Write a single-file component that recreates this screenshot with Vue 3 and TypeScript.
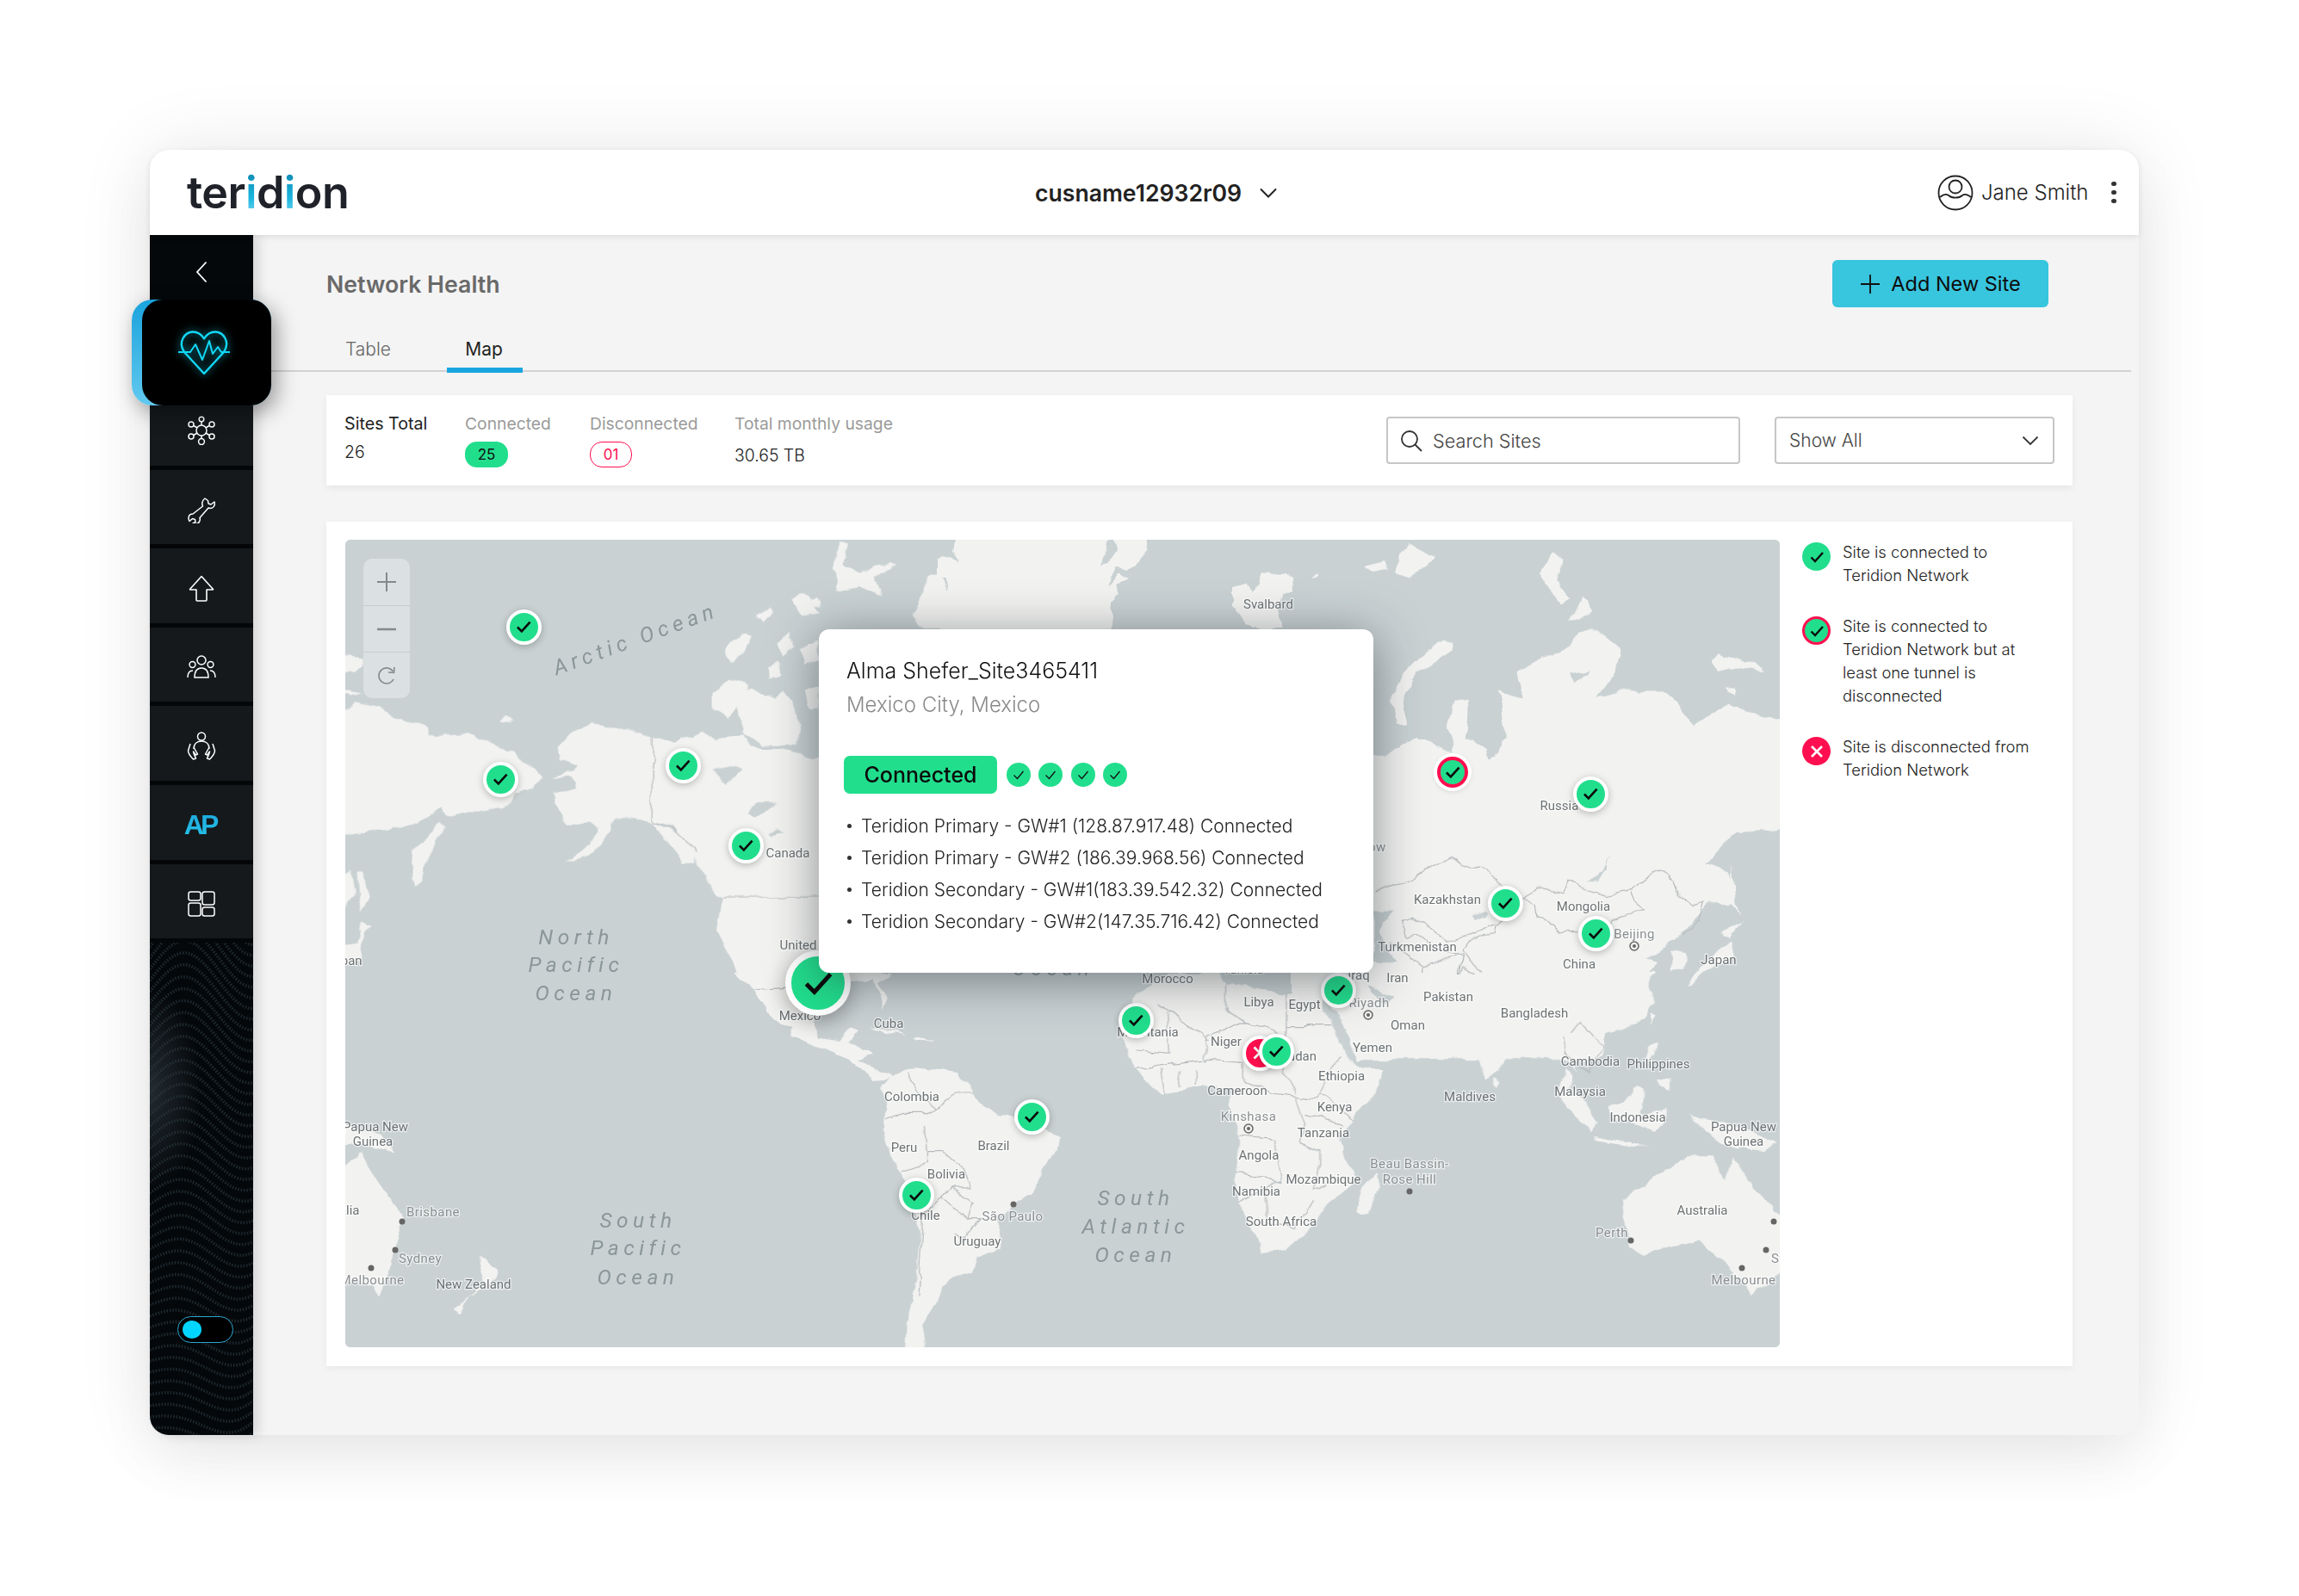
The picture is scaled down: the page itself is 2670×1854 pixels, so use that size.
<script setup lang="ts">
interface Pin { x: number; y: number; kind?: string }

// map area starts at 401,627 on the page, pins are given in page coordinates
const pins: Pin[] = [
  { x: 608, y: 728 }, { x: 581, y: 905 }, { x: 793, y: 889 }, { x: 866, y: 982 },
  { x: 1687, y: 897, kind: 'warn' }, { x: 1847, y: 922 }, { x: 1748, y: 1049 }, { x: 1853, y: 1084 },
  { x: 1554, y: 1150 }, { x: 1319, y: 1185 }, { x: 1463, y: 1223, kind: 'down' }, { x: 1482, y: 1221 },
  { x: 1198, y: 1297 }, { x: 1064, y: 1388 }, { x: 950, y: 1142, kind: 'big' }
]

const labels: [string, number, number][] = [
  ['Canada', 915, 991], ['United', 927, 1098], ['Mexico', 929, 1180], ['Cuba', 1032, 1189],
  ['Japan', 400, 1116], ['Papua New', 436, 1309], ['Guinea', 433, 1326], ['Australia', 388, 1406],
  ['New Zealand', 550, 1492], ['Colombia', 1059, 1274], ['Peru', 1050, 1333], ['Brazil', 1154, 1331],
  ['Bolivia', 1099, 1364], ['Chile', 1075, 1412], ['Uruguay', 1135, 1442], ['Morocco', 1356, 1137],
  ['Tunisia', 1444, 1126], ['Libya', 1462, 1164], ['Egypt', 1515, 1167], ['Iraq', 1578, 1133], ['Iran', 1623, 1136],
  ['Pakistan', 1682, 1158], ['Oman', 1635, 1191], ['Yemen', 1594, 1217], ['Bangladesh', 1782, 1177],
  ['Turkmenistan', 1646, 1100], ['Kazakhstan', 1681, 1045], ['Mongolia', 1839, 1053], ['China', 1834, 1120],
  ['Japan', 1996, 1115], ['Russia', 1811, 936], ['Svalbard', 1473, 702], ['Mauritania', 1333, 1199],
  ['Niger', 1424, 1210], ['Sudan', 1508, 1227], ['Ethiopia', 1558, 1250], ['Cameroon', 1437, 1267],
  ['Kenya', 1550, 1286], ['Tanzania', 1537, 1316], ['Angola', 1462, 1342], ['Mozambique', 1537, 1370],
  ['Namibia', 1459, 1384], ['South Africa', 1488, 1419], ['Maldives', 1707, 1274], ['Cambodia', 1847, 1233],
  ['Philippines', 1926, 1236], ['Malaysia', 1835, 1268], ['Indonesia', 1902, 1298], ['Papua New', 2025, 1309],
  ['Guinea', 2025, 1326], ['Australia', 1977, 1406]
]

const cities: [string, number, number][] = [
  ['Brisbane', 503, 1408], ['Sydney', 488, 1462], ['Melbourne', 432, 1487], ['São Paulo', 1176, 1413],
  ['Riyadh', 1590, 1165], ['Beijing', 1898, 1085], ['Moscow', 1580, 984], ['Kinshasa', 1450, 1297],
  ['Beau Bassin-', 1637, 1352], ['Rose Hill', 1637, 1370], ['Perth', 1872, 1432], ['Melbourne', 2025, 1487],
  ['Sydney', 2082, 1462], ['Brisbane', 2100, 1408]
]

const dots: [number, number][] = [
  [467, 1419], [459, 1452], [431, 1473], [1177, 1399], [1637, 1384], [1894, 1441],
  [2023, 1473], [2060, 1419], [2051, 1452]
]
const capitals: [number, number][] = [[1589, 1179], [1898, 1099], [1450, 1311]]

const oceans: [string, number, number][] = [
  ['North', 669, 1088], ['Pacific', 669, 1120], ['Ocean', 669, 1153],
  ['South', 741, 1417], ['Pacific', 741, 1449], ['Ocean', 741, 1483],
  ['South', 1319, 1391], ['Atlantic', 1319, 1424], ['Ocean', 1319, 1457],
  ['Ocean', 1223, 1124]
]

const tunnels = [
  'Teridion Primary - GW#1 (128.87.917.48) Connected',
  'Teridion Primary - GW#2 (186.39.968.56) Connected',
  'Teridion Secondary - GW#1(183.39.542.32) Connected',
  'Teridion Secondary - GW#2(147.35.716.42) Connected'
]

// wavy lines for the dark lower part of the sidebar
const waves: string[] = []
for (let i = -8; i < 44; i++) {
  let d = ''
  for (let x = 0; x <= 120; x += 6) {
    const y = 20 + i * 13 - 34 * Math.cos(((x - 40) / 120) * Math.PI * 1.5) + 0.9 * i * Math.sin(x / 30)
    d += (x === 0 ? 'M' : 'L') + x + ' ' + y.toFixed(1) + ' '
  }
  waves.push(d)
}
</script>

<template>
  <div class="page">
    <div class="card">
      <header class="topbar">
        <div class="logo">ter<span class="logo-i">i</span>d<span class="logo-i">i</span>on</div>
        <div class="tenant">
          <span>cusname12932r09</span>
          <svg width="22" height="12" viewBox="0 0 22 12"><path d="M2 1.5l9 9 9-9" fill="none" stroke="#222" stroke-width="2" /></svg>
        </div>
        <div class="user">
          <svg width="42" height="42" viewBox="0 0 42 42" fill="none" stroke="#222" stroke-width="1.8">
            <circle cx="21" cy="21" r="19.5" />
            <circle cx="21" cy="14" r="7.5" />
            <path d="M3 26c5-4 8-3.5 10-2 4 3.500 12 3.500 16 0 2-1.500 5-2 10 2" />
          </svg>
          <span class="user-name">Jane Smith</span>
          <span class="dots"><i></i><i></i><i></i></span>
        </div>
      </header>

      <div class="body">
        <aside class="sidebar">
          <svg class="sidebar-waves" viewBox="0 0 120 574" preserveAspectRatio="none">
            <path v-for="(d, i) in waves" :key="i" :d="d" fill="none" stroke="#2e3d44" stroke-width="3.5" stroke-dasharray="1.6 1.8" opacity=".6" />
          </svg>
          <div class="back">
            <svg width="14" height="26" viewBox="0 0 14 26"><path d="M12.5 1.5L2 13l10.5 11.5" fill="none" stroke="#fff" stroke-width="1.8" /></svg>
          </div>
          <div class="active">
            <div class="active-inner">
              <svg class="heart" width="60" height="52" viewBox="0 0 60 52" fill="none" stroke="#12d8f6" stroke-width="2.4" stroke-linejoin="round">
                <path d="M30 50L7 25C-1 13 8 1.5 17 1.5c6 0 10 3 13 8 3-5 7-8 13-8 9 0 18 11.5 10 23.500z" />
                <path d="M0 25h14l6-9 8 18 8-22 4 15 6-8 4 6h10" stroke-width="2" />
              </svg>
            </div>
          </div>
          <div class="item">
            <svg width="34" height="34" viewBox="0 0 34 34" fill="none" stroke="#fff" stroke-width="1.5">
              <circle cx="17" cy="17" r="6" />
              <circle cx="17" cy="4" r="2.8" /><circle cx="17" cy="30" r="3.4" />
              <circle cx="5" cy="10" r="3" /><circle cx="29" cy="10" r="3" />
              <circle cx="5" cy="24" r="3" /><circle cx="29" cy="24" r="3" />
              <path d="M17 7v4M17 23v3.5M8 11.5l4 2.500M26 11.5l-4 2.500M8 22.5l4-2.500M26 22.5l-4-2.500" />
            </svg>
          </div>
          <div class="item">
            <svg width="32" height="32" viewBox="0 0 32 32" fill="none" stroke="#fff" stroke-width="1.5" stroke-linejoin="round">
              <path d="M20 3c-3 2-4 6-2.500 9L6 21c-3 0-5 2-5 5 0 1.500.5 2.500 1 3.500l3.500-3 3 1 .5 3-3 1.500c3 1 6 .5 7.500-2 1-1.500 1-3 .5-4.500L24 14c3 1 6 0 7-3 .5-1.500.5-3 0-4l-4 3-3-1-.5-3.500z" />
            </svg>
          </div>
          <div class="item">
            <svg width="30" height="31" viewBox="0 0 30 31" fill="none" stroke="#fff" stroke-width="1.6" stroke-linejoin="round">
              <path d="M15 1.5L28.5 16.5a.5.5 0 0 1-.5.5H21v12a1 1 0 0 1-1 1H10a1 1 0 0 1-1-1V17H2a.5.5 0 0 1-.5-.5z" />
            </svg>
          </div>
          <div class="item">
            <svg width="34" height="28" viewBox="0 0 34 28" fill="none" stroke="#fff" stroke-width="1.5">
              <circle cx="17" cy="6" r="5" /><circle cx="6.5" cy="11" r="3.4" /><circle cx="27.5" cy="11" r="3.4" />
              <path d="M9 26c0-7 3-11 8-11s8 4 8 11zM1 26c0-5 2-8 6-8M33 26c0-5-2-8-6-8" />
            </svg>
          </div>
          <div class="item">
            <svg width="34" height="34" viewBox="0 0 34 34" fill="none" stroke="#fff" stroke-width="1.5" stroke-linejoin="round">
              <circle cx="17" cy="5.5" r="4.5" />
              <path d="M8 20c0-6 4-9 9-9s9 3 9 9" />
              <path d="M4 14L1.500 22c0 4 3 7 6 10l3-1c-1-3-3-5-3-8l3 4 2-1-4-7M30 14l2.500 8c0 4-3 7-6 10l-3-1c1-3 3-5 3-8l-3 4-2-1 4-7" />
            </svg>
          </div>
          <div class="item">
            <span class="ap">AP</span>
          </div>
          <div class="item">
            <svg width="32" height="30" viewBox="0 0 32 30" fill="none" stroke="#fff" stroke-width="1.5">
              <rect x="1" y="1" width="14" height="10" rx="2.5" /><rect x="1" y="14" width="14" height="15" rx="2.5" />
              <rect x="17" y="1" width="14" height="15" rx="2.5" /><rect x="17" y="19" width="14" height="10" rx="2.5" />
            </svg>
          </div>
          <div class="toggle"><span></span></div>
        </aside>

        <main class="main">
          <div class="title-row">
            <h1>Network Health</h1>
            <button class="add-btn">
              <svg width="24" height="24" viewBox="0 0 24 24"><path d="M12 1v22M1 12h22" stroke="#111" stroke-width="1.8" /></svg>
              Add New Site
            </button>
          </div>

          <div class="tabs">
            <span class="tab">Table</span>
            <span class="tab tab-on">Map</span>
          </div>

          <section class="summary">
            <div class="stat stat-total">
              <b>Sites Total</b>
              <span>26</span>
            </div>
            <div class="stat stat-conn">
              <em>Connected</em>
              <span class="badge badge-green">25</span>
            </div>
            <div class="stat stat-disc">
              <em>Disconnected</em>
              <span class="badge badge-red">01</span>
            </div>
            <div class="stat">
              <em>Total monthly usage</em>
              <span class="usage">30.65 TB</span>
            </div>
            <div class="search">
              <svg width="28" height="28" viewBox="0 0 28 28" fill="none" stroke="#333" stroke-width="1.8"><circle cx="12" cy="12" r="9" /><path d="M18.5 18.5l7.5 7.500" /></svg>
              <span>Search Sites</span>
            </div>
            <div class="select">
              <span>Show All</span>
              <svg width="20" height="12" viewBox="0 0 20 12"><path d="M1.5 1.5L10 10l8.500-8.500" fill="none" stroke="#333" stroke-width="1.8" /></svg>
            </div>
          </section>

          <section class="map-panel">
            <div class="map">
              <svg class="map-svg" viewBox="401 627 1666 938" width="1666" height="938">
                <defs>
                  <filter id="rough" x="-3%" y="-3%" width="106%" height="106%">
                    <feTurbulence type="fractalNoise" baseFrequency=".04" numOctaves="3" seed="7" />
                    <feDisplacementMap in="SourceGraphic" scale="11" xChannelSelector="R" yChannelSelector="G" />
                  </filter>
                </defs>
                <rect x="401" y="627" width="1666" height="938" fill="#c9d1d3" />

                <g filter="url(#rough)">
                  <!-- greenland and svalbard -->
                  <g fill="#f2f2f0">
                    <path d="M1090 600H1330L1332 640 1320 655 1300 665 1310 672 1295 680 1300 690 1290 700 1292 715 1290 735H1090Z" />
                    <path d="M1432 682L1448 678 1456 690 1465 665 1480 668 1502 670 1503 685 1490 690 1485 710 1490 725 1490 731 1470 731 1445 725 1432 705Z" />
                    <path d="M1523 670L1530 665 1530 670 1523 672Z" />
                  </g>
                  <g fill="#c9d1d3">
                    <path d="M1085 600L1112 600 1105 640 1112 650 1095 645 1085 655Z" />
                    <path d="M1085 672L1100 672 1098 685 1085 695Z" />
                    <path d="M1290 610L1296 640 1285 655 1278 657 1284 640Z" />
                    <path d="M1295 658L1310 660 1296 668 1290 682 1288 672Z" />
                  </g>

                  <!-- north west part -->
                  <g transform="translate(400 620) scale(.4464 .3827)">
                    <g fill="#f2f2f0">
                      <path d="M-30 360L20 368 45 372 48 400 30 420 -30 420Z" />
                      <path d="M-30 470L30 480 50 485 20 492 -30 482Z" />
                      <path d="M-30 555L30 510 90 525 120 548 180 572 215 590 220 612 290 608 325 605 345 612 400 645 440 660 468 700 515 730 490 775 440 790 410 825 345 840 270 860 255 825 225 855 175 882 100 900 30 905 -30 925Z" />
                      <path d="M180 960L250 880 262 890 240 930 215 1000 185 1070 175 1040Z" />
                      <path d="M405 570L425 550 442 565 430 578Z" />
                      <path d="M35 1020L50 1020 60 1110 45 1150 38 1100Z" />
                      <path d="M-30 1040L20 1020 30 1100 -30 1170Z" />
                      <path d="M-30 1250L30 1240 40 1180 70 1190 45 1210 40 1290 -30 1320Z" />
                      <path d="M555 650L590 605 650 565 690 590 750 600 800 618V875L830 890 850 890 880 920 910 965 910 1000 880 1000 840 940 800 880 750 865 710 860 690 910 640 975 570 1000 620 960 660 900 640 880 580 880 560 850 545 790 605 770 590 745 545 740 600 720 610 710 560 690Z" />
                      <path d="M800 618L860 640 930 600 965 625 1040 615 1060 650 1120 650 1235 680 1400 680V1345H1150L1040 1355 1000 1280 970 1200 985 1105 960 1080 915 1000 905 960 860 890 830 885 800 875Z" />
                      <path d="M985 350L1030 300 1055 310 1040 360 1010 395Z" />
                      <path d="M960 480L1000 435 1050 460 1055 490 1000 560 960 530Z" />
                      <path d="M1040 560L1020 520 1060 470 1120 500 1140 470 1160 500 1190 590 1170 640 1090 640 1040 610Z" />
                      <path d="M1160 200L1200 180 1240 240 1190 250Z" />
                      <path d="M1270 110L1290 20 1310 30 1300 90 1340 120 1400 90 1440 90 1380 130 1395 190 1340 160 1290 170Z" />
                      <path d="M1480 250L1520 130 1560 130 1568 290H1500Z" />
                      <path d="M1070 250L1110 225 1115 245 1090 270Z" />
                      <path d="M1180 350L1230 330 1240 380 1200 400Z" />
                      <path d="M1200 480L1235 460 1235 530 1210 530Z" />
                      <path d="M1130 330L1160 300 1170 340 1140 370Z" />
                      <path d="M1100 400L1130 390 1135 430 1105 440Z" />
                      <path d="M1215 200L1230 190 1240 220 1222 225Z" />
                    </g>
                    <g fill="#c9d1d3">
                      <path d="M960 720L1010 705 1035 715 1000 760 975 735Z" />
                      <path d="M1045 850L1070 815 1120 815 1070 860Z" />
                      <path d="M1100 910L1130 895 1150 905 1110 915Z" />
                    </g>
                    <path class="border" d="M800 618V875L860 890 910 965M985 1105H1240M1040 1355L1110 1372 1150 1370" />
                  </g>

                  <!-- asia -->
                  <g transform="translate(1500 630) scale(.3827)">
                    <g fill="#f2f2f0">
                      <path d="M320 550L300 480 340 400 400 340 460 295 490 300 485 325 430 360 380 400 335 470 355 555Z" />
                      <path d="M220 75L280 60 290 85 240 95Z" />
                      <path d="M330 40L360 10 440 40 400 85 350 105 310 90Z" />
                      <path d="M755 100L790 30 825 60 800 110 845 170 820 190 780 140Z" />
                      <path d="M845 235L880 160 910 205 870 230Z" />
                      <path d="M1280 360L1300 335 1340 350 1430 380 1430 395 1350 380 1290 395Z" />
                      <path d="M1320 440L1350 440 1345 460 1320 450Z" />
                      <path d="M0 680L250 650 330 620 380 590 400 590 480 640 490 620 470 560 490 480 535 475 540 560 555 610 590 630 600 660 620 650 650 590 630 450 700 470 680 400 760 350 850 310 880 270 910 260 1000 320 1005 350 960 420 920 470 1000 450 1120 450 1180 500 1220 550 1330 490 1400 520 1530 550V870L1350 880 1290 930 1260 970 1330 1000 1350 1080 1330 1100 1260 1100 1180 1190 1115 1240 1070 1260 1110 1270 1080 1310 1100 1390 1070 1450 1000 1480 960 1490 940 1568H0Z" />
                      <path d="M1200 1345L1240 1290 1330 1210 1340 1260 1290 1290 1250 1310 1210 1345Z" />
                      <path d="M1310 1180L1370 1150 1330 1200Z" />
                      <path d="M1340 980L1350 1100 1360 1130 1330 1090Z" />
                      <path d="M1150 1240L1190 1250 1190 1290 1155 1305Z" />
                      <path d="M1090 1430L1105 1435 1090 1470Z" />
                    </g>
                    <g fill="#c9d1d3">
                      <path d="M250 1120L310 1120 280 1150 270 1190 320 1270 250 1270Z" />
                      <path d="M545 1130L590 1120 600 1130 550 1145Z" />
                      <path d="M895 1030L945 1000 965 950 955 990 930 1030Z" />
                      <path d="M540 475L560 480 552 600 530 600Z" />
                      <path d="M230 1345L290 1370 310 1380 290 1395 260 1380Z" />
                      <path d="M560 480L580 510 570 540 600 570 600 650 580 610 560 600Z" />
                      <path d="M850 395L910 385 860 430Z" />
                    </g>
                    <path class="border" d="M250 1060L320 1040 400 1000 490 960 520 985 580 980 620 1030 650 1060M700 1080L760 1045 820 1060 840 1020 880 1050 950 1075 1030 1060 1085 1010 1120 995 1150 1010 1170 1060 1210 1100 1250 1090 1235 1150 1190 1185M700 1080L740 1100 745 1145 800 1160 820 1185 880 1185 960 1160 1010 1140 1075 1110 1040 1090 1030 1065M650 1060L700 1080 625 1160 620 1190 550 1200 520 1240 540 1270 620 1350 700 1390 780 1400M340 1145L370 1135 420 1170 470 1210 540 1190 620 1160M340 1145V1200L380 1190 430 1235 500 1250 520 1260M400 1290L520 1250 505 1320 440 1400M300 1210L400 1290 395 1350M505 1320L520 1290 600 1330 620 1370 700 1400" />
                  </g>

                  <!-- africa, south asia, oceania on the east side -->
                  <g transform="translate(1250 1130) scale(.542 .3333)">
                    <g fill="#f2f2f0">
                      <path d="M200 0L150 50 120 100 100 160 95 205 110 265 130 340 185 425 280 400 340 410 325 460 345 550 345 640 340 700 345 800 400 975 440 965 490 920 530 820 600 720 575 640 565 570 590 510 640 420 660 335 595 320 555 230 530 130 520 90 440 70 380 55 320 40 300 0Z" />
                      <path d="M600 830L610 760 650 690 650 745 625 835Z" />
                      <path d="M540 60L560 130 600 310 680 255 725 220 745 165 700 130 670 150 650 90 640 80 615 60 620 0H540Z" />
                      <path d="M740 130L800 140 840 190 870 350 880 375 905 340 940 240 990 190 1020 230 1045 280 1075 350 1060 290 1095 310 1130 260 1120 210 1180 170 1240 100 1230 40 1240 0H700V110Z" />
                      <path d="M1050 330L1065 360 1060 400 1095 470 1115 520 1105 560 1065 490 1035 420Z" />
                      <path d="M1140 470L1190 430 1200 400 1215 410 1210 490 1250 530 1240 555 1180 520 1150 510Z" />
                      <path d="M1110 570L1190 595 1230 610 1190 605 1110 585Z" />
                      <path d="M1225 490L1265 470 1260 520 1240 550Z" />
                      <path d="M1225 260L1245 240 1240 290 1225 310Z" />
                      <path d="M1245 370L1275 360 1275 405 1255 390Z" />
                      <path d="M1315 495L1340 510 1400 520 1500 590 1470 625 1380 600 1360 560Z" />
                      <path d="M895 370L910 385 905 405 895 395Z" />
                      <path d="M1170 790L1260 690 1310 640 1360 640 1390 720 1410 640 1440 720 1500 830 1535 850V1000L1450 1130 1425 1060 1370 980 1330 930 1215 980 1185 960 1175 880Z" />
                    </g>
                    <path d="M530 90L546 100 600 300 590 310 555 210 530 130Z" fill="#c9d1d3" />
                    <path class="border" d="M175 110L270 215 285 240M195 140L200 280 130 270M320 40V130L365 170 280 220 275 300 360 310M365 170L420 195 450 245V185H545M450 70V185M360 310V380L420 420 470 430 515 440 545 340 570 290M450 245L440 340 470 420M130 340L200 320 280 305M180 340L190 420M220 340L222 400M255 340V400M470 430L490 530 480 590 520 620V680L510 760 540 740M340 700L440 725 425 580 345 570M345 800L410 750 425 725M410 760V870L470 890 510 790M520 420L590 510M490 490L570 530M1040 220L1045 280 1100 350 1130 260 1080 170 1060 210" />
                  </g>

                  <!-- americas and the west side of oceania -->
                  <g transform="translate(400 1130) scale(.574 .3333)">
                    <g fill="#f2f2f0">
                      <path d="M790 0L830 60 865 170 905 185 905 225 975 270 1000 260 1020 240 1040 200 1025 190 1000 240 960 230 945 160 970 70 1000 30 1070 20 1090 130 1095 90 1080 40 1110 0Z" />
                      <path d="M975 270L1040 320 1070 375 1110 370 1090 350 1040 300 1070 290 1020 240Z" />
                      <path d="M1060 190L1120 205 1135 215 1085 205Z" />
                      <path d="M1150 225L1190 235 1160 240Z" />
                      <path d="M1090 385L1140 330 1160 325 1240 345 1270 420 1320 490 1390 520 1445 570 1440 620 1410 700 1390 770 1320 850 1330 900 1325 960 1280 990 1270 1040 1210 1085 1200 1150 1170 1230 1180 1340H1135L1140 1190 1160 1030 1165 900 1150 800 1130 700 1105 650 1085 540 1100 480Z" />
                      <path d="M-30 700L25 650 35 630 50 680 100 810 120 850 100 960 90 1040 70 1130 55 1090 -30 1050Z" />
                      <path d="M275 985L310 1035 290 1090 250 1130 235 1185 220 1170 280 1090Z" />
                      <path d="M-30 520L70 560 100 625 50 600 -30 600Z" />
                    </g>
                    <path class="border" d="M830 60L905 50 960 60M1140 340L1160 420 1195 470 1170 490 1130 490 1095 510M1195 470L1240 420 1270 420M1175 540L1180 620 1210 620 1250 680 1270 750 1230 750 1210 780M1130 690L1180 660V620M1160 1130L1170 850 1210 780 1260 860H1285L1255 920 1235 910M1260 860L1270 800 1230 750" />
                  </g>
                </g>

                <text class="ocean" transform="translate(738 742) rotate(-20)">Arctic Ocean</text>
                <text v-for="o in oceans" :key="o[0] + o[1] + o[2]" class="ocean" :x="o[1]" :y="o[2]">{{ o[0] }}</text>
                <text v-for="l in labels" :key="l[0] + l[1]" class="place" :x="l[1]" :y="l[2]">{{ l[0] }}</text>
                <text v-for="c in cities" :key="c[0] + c[1]" class="place city" :x="c[1]" :y="c[2]">{{ c[0] }}</text>
                <circle v-for="d in dots" :key="d[0] + '-' + d[1]" :cx="d[0]" :cy="d[1]" r="3.5" fill="#666" />
                <g v-for="c in capitals" :key="c[0]" fill="none" stroke="#666">
                  <circle :cx="c[0]" :cy="c[1]" r="5" stroke-width="1.5" />
                  <circle :cx="c[0]" :cy="c[1]" r="2" fill="#666" stroke="none" />
                </g>
              </svg>

              <div class="controls">
                <div class="ctl">
                  <svg width="24" height="24" viewBox="0 0 24 24"><path d="M12 1v22M1 12h22" stroke="#85898b" stroke-width="2" /></svg>
                </div>
                <div class="ctl">
                  <svg width="24" height="4" viewBox="0 0 24 4"><path d="M1 2h22" stroke="#85898b" stroke-width="2.4" /></svg>
                </div>
                <div class="ctl">
                  <svg width="22" height="22" viewBox="0 0 22 22" fill="none" stroke="#85898b" stroke-width="1.6"><path d="M18.5 6A9 9 0 1 0 19 15" /><path d="M20 1l-.5 6.500-6.500-.5" /></svg>
                </div>
              </div>

              <div
                v-for="(p, i) in pins"
                :key="i"
                class="pin"
                :class="p.kind"
                :style="{ left: p.x - 401 + 'px', top: p.y - 627 + 'px' }"
              >
                <svg v-if="p.kind !== 'down'" viewBox="0 0 24 24"><path d="M5.5 12.5l4.500 4.500 9-10" fill="none" stroke="#0a0a0a" stroke-width="2.4" /></svg>
                <svg v-else viewBox="0 0 24 24"><path d="M6 6l12 12M18 6L6 18" fill="none" stroke="#fff" stroke-width="2.6" /></svg>
              </div>

              <div class="popup">
                <div class="popup-title">Alma Shefer_Site3465411</div>
                <div class="popup-sub">Mexico City, Mexico</div>
                <div class="popup-status">
                  <span class="pill">Connected</span>
                  <span v-for="n in 4" :key="n" class="tick">
                    <svg width="16" height="16" viewBox="0 0 16 16"><path d="M2.5 8.5L6.5 12.500 13.500 4" fill="none" stroke="#111" stroke-width="1.3" /></svg>
                  </span>
                </div>
                <ul class="popup-list">
                  <li v-for="t in tunnels" :key="t">{{ t }}</li>
                </ul>
              </div>
            </div>

            <div class="legend">
              <div class="legend-row">
                <span class="dot dot-green">
                  <svg viewBox="0 0 24 24"><path d="M5.5 12.5l4.500 4.500 9-10" fill="none" stroke="#0a0a0a" stroke-width="2.4" /></svg>
                </span>
                <p>Site is connected to<br />Teridion Network</p>
              </div>
              <div class="legend-row">
                <span class="dot dot-warn">
                  <svg viewBox="0 0 24 24"><path d="M5.5 12.5l4.500 4.500 9-10" fill="none" stroke="#0a0a0a" stroke-width="2.4" /></svg>
                </span>
                <p>Site is connected to<br />Teridion Network but at<br />least one tunnel is<br />disconnected</p>
              </div>
              <div class="legend-row">
                <span class="dot dot-red">
                  <svg viewBox="0 0 24 24"><path d="M6 6l12 12M18 6L6 18" fill="none" stroke="#fff" stroke-width="2.6" /></svg>
                </span>
                <p>Site is disconnected from<br />Teridion Network</p>
              </div>
            </div>
          </section>
        </main>
      </div>
    </div>
  </div>
</template>

<style>
html,
body {
  margin: 0;
  background: #fff;
}
</style>

<style scoped>
.page {
  width: 2670px;
  height: 1854px;
  box-sizing: border-box;
  padding: 174px 186px 0 174px;
  background: #fff;
  font-family: Inter, "Liberation Sans", sans-serif;
  color: #222;
}

.card {
  width: 2310px;
  height: 1493px;
  display: flex;
  flex-direction: column;
  background: #f4f4f4;
  border-radius: 22px;
  box-shadow: 0 0 90px rgba(0, 0, 0, 0.09), 0 30px 70px rgba(0, 0, 0, 0.05);
}

.topbar {
  height: 99px;
  flex: none;
  display: grid;
  grid-template-columns: 1028px 1fr auto;
  align-items: center;
  padding: 0 26.5px 0 43px;
  background: #fff;
  border-radius: 22px 22px 0 0;
  box-shadow: 0 2px 7px rgba(0, 0, 0, 0.1);
  position: relative;
  z-index: 3;
  box-sizing: border-box;
}

.logo {
  font-size: 52px;
  font-weight: 600;
  letter-spacing: -0.6px;
  color: #20222a;
  grid-column: 1;
}
.logo-i {
  background: linear-gradient(#0c7ea6, #1bb5df 60%, #8adcf2);
  -webkit-background-clip: text;
  background-clip: text;
  color: transparent;
}

.tenant {
  display: flex;
  align-items: center;
  gap: 20px;
  font-size: 26.6px;
  font-weight: 600;
  color: #222;
  margin-left: -43px;
}

.user {
  display: flex;
  align-items: center;
  gap: 9px;
}
.user-name {
  font-size: 24px;
  font-weight: 300;
  color: #222;
}
.dots {
  display: flex;
  flex-direction: column;
  gap: 4.5px;
  margin-left: 17.5px;
}
.dots i {
  width: 5.5px;
  height: 5.5px;
  border-radius: 50%;
  background: #333;
}

.body {
  flex: 1;
  min-height: 0;
  display: flex;
}

.sidebar {
  width: 120px;
  flex: none;
  position: relative;
  display: flex;
  flex-direction: column;
  border-radius: 0 0 0 22px;
  background: radial-gradient(60px 120px at 0 30%, #222b30, transparent) no-repeat 0 100% / 100% 574px, #05080b;
  box-shadow: 6px 0 14px rgba(0, 0, 0, 0.13);
}
.sidebar-waves {
  position: absolute;
  left: 0;
  right: 0;
  bottom: 0;
  width: 100%;
  height: 574px;
  border-radius: 0 0 0 22px;
}

.back {
  height: 75px;
  flex: none;
  display: flex;
  align-items: center;
  justify-content: center;
  box-sizing: border-box;
  padding-top: 11px;
}

.active {
  width: 162px;
  height: 123px;
  flex: none;
  margin: 0 0 -17px -21px;
  background: linear-gradient(#1aa3dd, #62c9ef);
  border-radius: 24px;
  padding-left: 12px;
  box-sizing: border-box;
  position: relative;
  z-index: 2;
  box-shadow: 6px 8px 24px rgba(0, 0, 0, 0.38);
}
.active-inner {
  height: 100%;
  background: #000;
  border-radius: 24px;
  display: flex;
  align-items: center;
  justify-content: center;
  padding-right: 6px;
}
.heart {
  overflow: visible;
  filter: drop-shadow(0 0 5px rgba(18, 216, 246, 0.75));
}

.item {
  height: 91.6px;
  flex: none;
  display: flex;
  align-items: center;
  justify-content: center;
  box-sizing: border-box;
  padding-top: 6px;
  background: #15191c;
  border-bottom: 5.5px solid #040607;
  position: relative;
}
.item:last-of-type {
  border-bottom: 0;
}
.ap {
  font-family: "Liberation Sans", sans-serif;
  font-size: 32px;
  font-weight: 700;
  letter-spacing: -4px;
  background: linear-gradient(#1ca6dc, #27c6ea);
  -webkit-background-clip: text;
  background-clip: text;
  color: transparent;
  padding-right: 4px;
}

.toggle {
  width: 65px;
  height: 31px;
  box-sizing: border-box;
  margin: auto 0 107px 32px;
  background: #000;
  border: 1.5px solid #2aa7cf;
  border-radius: 16px;
  padding: 3.5px 4.5px;
  position: relative;
  flex: none;
}
.toggle span {
  display: block;
  width: 22px;
  height: 21px;
  border-radius: 50%;
  background: #00d5ff;
}

.main {
  flex: 1;
  min-width: 0;
  padding: 29px 77px 80px 85px;
  box-sizing: border-box;
  display: flex;
  flex-direction: column;
}

.title-row {
  height: 55px;
  flex: none;
  display: flex;
  align-items: center;
  justify-content: space-between;
  padding-right: 28px;
}
h1 {
  margin: 0;
  font-size: 26.7px;
  font-weight: 600;
  color: #696969;
}
.add-btn {
  width: 251px;
  height: 55px;
  border: 0;
  border-radius: 6px;
  background: #38c5de;
  display: flex;
  align-items: center;
  justify-content: center;
  gap: 12px;
  font-family: inherit;
  font-size: 23.5px;
  font-weight: 400;
  color: #0c0c0c;
}

.tabs {
  height: 75px;
  flex: none;
  margin: 0 -68px 0 -85px;
  padding-left: 85px;
  box-sizing: border-box;
  border-bottom: 2px solid #d2d2d2;
  display: flex;
  align-items: flex-end;
  gap: 43px;
}
.tab {
  width: 97px;
  height: 42px;
  text-align: center;
  font-size: 21px;
  font-weight: 300;
  color: #666;
  margin-bottom: -3px;
  box-sizing: content-box;
  border-bottom: 6px solid transparent;
  line-height: 41px;
}
.tab-on {
  width: 86px;
  padding-right: 2px;
  color: #222;
  font-weight: 400;
  border-bottom-color: #1ba5e0;
}

.summary {
  height: 105px;
  flex: none;
  margin-top: 27px;
  background: #fff;
  box-shadow: 0 3px 8px rgba(0, 0, 0, 0.06);
  display: flex;
  align-items: center;
  padding: 0 21px;
  box-sizing: border-box;
}
.stat {
  align-self: flex-start;
  padding-top: 21px;
  display: flex;
  flex-direction: column;
  align-items: flex-start;
  font-size: 19.4px;
}
.stat-total { width: 140px; }
.stat-conn { width: 145px; }
.stat-disc { width: 168px; }
.stat b {
  font-weight: 400;
  color: #222;
  font-size: 19.7px;
  line-height: 24px;
}
.stat em {
  font-style: normal;
  font-weight: 400;
  color: #9a9a9a;
  font-size: 19.3px;
  line-height: 24px;
}
.stat-total span {
  margin-top: 9px;
  line-height: 24px;
  font-weight: 300;
}
.usage {
  margin-top: 13px;
  font-weight: 300;
  line-height: 24px;
}
.badge {
  margin-top: 9px;
  height: 30px;
  display: flex;
  align-items: center;
  justify-content: center;
  box-sizing: border-box;
  border-radius: 14px;
  font-size: 17px;
  width: 50px;
}
.badge-green {
  background: #21de8d;
  color: #111;
}
.badge-red {
  width: 49px;
  border: 1.5px solid #ff0f4f;
  color: #ff0f4f;
}

.search {
  width: 411px;
  height: 55px;
  margin-left: auto;
  box-sizing: border-box;
  border: 2px solid #c6c6c6;
  border-radius: 4px;
  display: flex;
  align-items: center;
  gap: 11px;
  padding-left: 13px;
  font-size: 21.7px;
  font-weight: 300;
  color: #444;
}
.select {
  width: 325px;
  height: 55px;
  margin-left: 40px;
  box-sizing: border-box;
  border: 2px solid #c6c6c6;
  border-radius: 4px;
  display: flex;
  align-items: center;
  justify-content: space-between;
  padding: 0 16px 0 15px;
  font-size: 21px;
  font-weight: 300;
  color: #444;
}

.map-panel {
  margin-top: 42px;
  height: 981px;
  flex: none;
  background: #fff;
  box-shadow: 0 3px 8px rgba(0, 0, 0, 0.05);
  padding: 21px 22px;
  box-sizing: border-box;
  display: flex;
  gap: 26px;
}

.map {
  width: 1666px;
  height: 938px;
  flex: none;
  position: relative;
  overflow: hidden;
  border-radius: 6px;
  background: #c9d1d3;
}
.map-svg {
  display: block;
}
.border {
  fill: none;
  stroke: #b7bbbd;
  stroke-width: 1.2;
  vector-effect: non-scaling-stroke;
}
.place {
  font-family: Roboto, "Liberation Sans", sans-serif;
  font-size: 15px;
  fill: #6d7274;
  stroke: rgba(255, 255, 255, 0.65);
  stroke-width: 2.5px;
  paint-order: stroke;
  text-anchor: middle;
  dominant-baseline: central;
}
.city {
  fill: #8b8f91;
  letter-spacing: 0.4px;
}
.ocean {
  font-family: Roboto, "Liberation Sans", sans-serif;
  font-size: 24.5px;
  font-style: italic;
  letter-spacing: 5.5px;
  fill: #8b9699;
  text-anchor: middle;
  dominant-baseline: central;
}

.controls {
  position: absolute;
  left: 21px;
  top: 22px;
  width: 54px;
  border-radius: 10px;
  background: rgba(255, 255, 255, 0.34);
  overflow: hidden;
}
.ctl {
  height: 54px;
  display: flex;
  align-items: center;
  justify-content: center;
  border-top: 1px solid rgba(180, 186, 188, 0.5);
  box-sizing: border-box;
}
.ctl:first-child {
  border-top: 0;
}

.pin {
  position: absolute;
  width: 41px;
  height: 41px;
  margin: -20.5px 0 0 -20.5px;
  box-sizing: border-box;
  border: 4px solid #fff;
  border-radius: 50%;
  background: #21de8d;
  box-shadow: 0 2px 8px rgba(0, 0, 0, 0.25);
  display: flex;
  align-items: center;
  justify-content: center;
}
.pin svg {
  width: 26px;
  height: 26px;
}
.pin.big {
  width: 76px;
  height: 76px;
  margin: -38px 0 0 -38px;
  border-width: 7px;
  box-shadow: 0 6px 26px rgba(0, 0, 0, 0.35);
}
.pin.big svg {
  width: 50px;
  height: 50px;
}
.pin.warn {
  box-shadow: 0 0 0 4px #fff, 0 2px 8px rgba(0, 0, 0, 0.25);
  border-color: #ff0f4f;
  width: 36px;
  height: 36px;
  margin: -18px 0 0 -18px;
}
.pin.down {
  background: #ff0f4f;
}

.popup {
  position: absolute;
  left: 550px;
  top: 104px;
  width: 644px;
  height: 399px;
  box-sizing: border-box;
  padding: 28px 29px 0;
  background: #fff;
  border-radius: 12px;
  box-shadow: 0 8px 55px rgba(30, 40, 45, 0.5);
}
.popup-title,
.popup-sub {
  padding-left: 3px;
  font-size: 25px;
  font-weight: 300;
  line-height: 40px;
  color: #111;
}
.popup-sub {
  font-size: 24px;
  color: #8a8a8a;
}
.popup-status {
  margin-top: 39px;
  display: flex;
  align-items: center;
  gap: 9.5px;
}
.pill {
  width: 178px;
  height: 44px;
  margin-right: 1px;
  border-radius: 7px;
  background: #21de8d;
  color: #0b0b0b;
  display: flex;
  align-items: center;
  justify-content: center;
  font-size: 25px;
  font-weight: 500;
}
.tick {
  width: 28px;
  height: 28px;
  border-radius: 50%;
  background: #21de8d;
  display: flex;
  align-items: center;
  justify-content: center;
}
.popup-list {
  list-style: none;
  margin: 19px 0 0;
  padding: 0;
}
.popup-list li {
  height: 37px;
  display: flex;
  align-items: center;
  font-size: 21px;
  font-weight: 300;
  color: #222;
  padding-left: 4px;
}
.popup-list li::before {
  content: "";
  width: 5px;
  height: 5px;
  border-radius: 50%;
  background: #333;
  margin-right: 11px;
  flex: none;
}

.legend {
  width: 300px;
  padding-top: 1px;
}
.legend-row {
  display: flex;
  gap: 14px;
  margin-bottom: 32px;
}
.dot {
  width: 33px;
  height: 33px;
  flex: none;
  border-radius: 50%;
  box-sizing: border-box;
  display: flex;
  align-items: center;
  justify-content: center;
  margin-top: 2px;
}
.dot svg {
  width: 24px;
  height: 24px;
}
.dot-green { background: #21de8d; }
.dot-warn {
  background: #21de8d;
  border: 3px solid #ff0f4f;
}
.dot-red { background: #ff0f4f; }
.legend p {
  margin: 0;
  font-size: 18.4px;
  font-weight: 300;
  line-height: 27px;
  color: #222;
}
</style>
